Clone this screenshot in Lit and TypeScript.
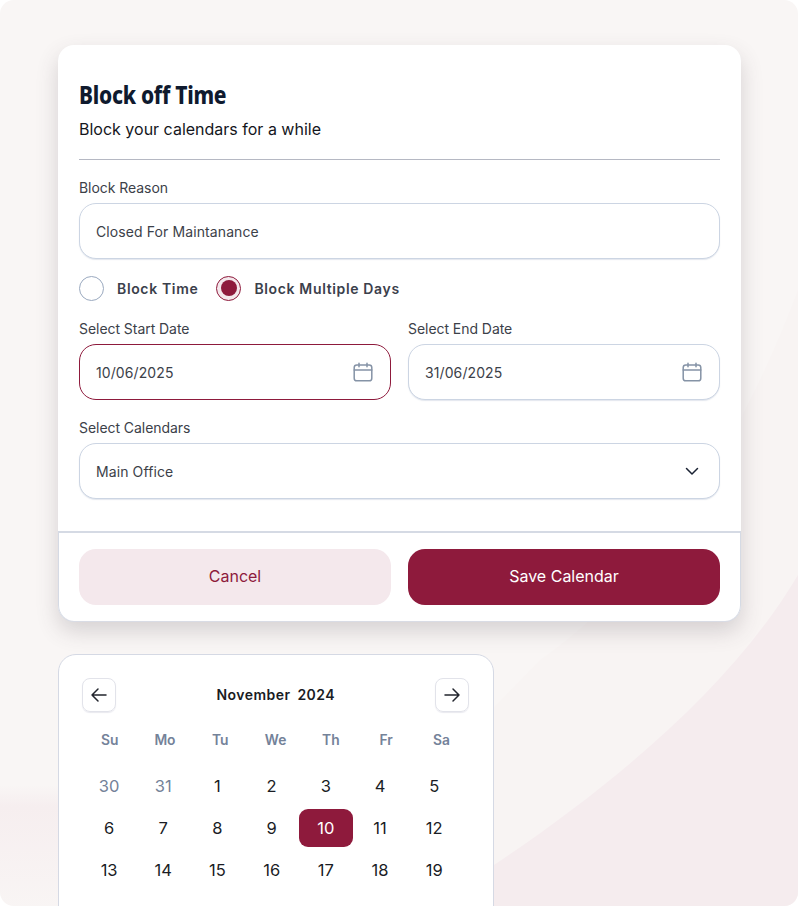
import { LitElement, html, css, svg } from "lit";
import { customElement } from "lit/decorators.js";

const calIcon = html`<svg class="ico" width="20" height="20" viewBox="0 0 20 20" fill="none" stroke="#8593a6" stroke-width="1.5" stroke-linecap="round" stroke-linejoin="round"><rect x="1.2" y="3" width="17.6" height="15.8" rx="2.6"/><path d="M1.2 8h17.6M6 1.2v3.6M14 1.2v3.6"/></svg>`;

const WEEK = ["Su", "Mo", "Tu", "We", "Th", "Fr", "Sa"];
const DAYS: [string, boolean][] = [
  ["30", true], ["31", true],
  ...Array.from({ length: 19 }, (_, i) => [String(i + 1), false] as [string, boolean]),
];

@customElement("app-root")
export class AppRoot extends LitElement {
  static styles = css`
    :host {
      display: block;
      position: relative;
      width: 798px;
      height: 906px;
      overflow: hidden;
      border-radius: 14px;
      background: #f9f6f5;
      font-family: "Inter", "Liberation Sans", sans-serif;
      color: #1a1c24;
      box-sizing: border-box;
      padding: 45px 57px 0 58px;
    }
    * { box-sizing: border-box; }
    .bg { position: absolute; inset: 0; width: 798px; height: 906px; }
    .stack { position: relative; display: flex; flex-direction: column; gap: 33px; }
    .card {
      width: 683px;
      height: 576px;
      background: #fff;
      border-radius: 16px;
      box-shadow: 0 1px 0 #d9dce5, 0 10px 22px rgba(70, 60, 70, 0.2);
      display: flex;
      flex-direction: column;
    }
    .body { flex: 1; padding: 31px 21px 0 21px; display: flex; flex-direction: column; }
    h1 {
      margin: 0;
      font-family: "Noto Sans", sans-serif;
      font-weight: 800;
      font-size: 25.5px;
      line-height: 36px;
      letter-spacing: -0.3px;
      color: #0f1a2e;
      transform: scaleX(0.82);
      transform-origin: left center;
      white-space: nowrap;
    }
    .sub { margin-top: 5px; font-size: 16px; line-height: 24px; color: #14161c; }
    .rule { height: 1px; background: #b5b8c3; margin-top: 18px; }
    label {
      display: block;
      font-size: 14px;
      line-height: 18px;
      letter-spacing: -0.05px;
      color: #3c4149;
    }
    .first { margin-top: 19px; }
    .field {
      margin-top: 6px;
      height: 56px;
      border: 1px solid #ccd5e3;
      border-radius: 17px;
      padding: 0 16px;
      display: flex;
      align-items: center;
      justify-content: space-between;
      font-size: 14px;
      letter-spacing: 0.1px;
      color: #3c4149;
      box-shadow: 0 1px 1px rgba(200, 208, 222, 0.5);
      background: #fff;
    }
    .field.active { border-color: #8e1a3c; box-shadow: none; }
    .ico { flex: none; margin-right: 1px; }
    .radios { margin-top: 16px; display: flex; align-items: center; height: 26px; }
    .radio { display: flex; align-items: center; gap: 13px; margin-right: 18px; font-size: 14px; font-weight: 600; letter-spacing: 0.65px; color: #3b404b; }
    .dot { width: 25px; height: 25px; border-radius: 50%; border: 1.5px solid #9aa9bf; background: #fff; display: flex; align-items: center; justify-content: center; }
    .dot.on { border-color: #8e1a3c; background: #f4e8ec; }
    .dot.on::after { content: ""; width: 16px; height: 16px; border-radius: 50%; background: #8e1a3c; }
    .cols { display: grid; grid-template-columns: 312px 312px; column-gap: 17px; margin-top: 19px; }
    .sel { margin-top: 19px; }
    .footer {
      height: 90px;
      border-top: 2px solid #d5dae4;
      border-left: 1px solid #d5dae4;
      border-right: 1px solid #d5dae4;
      border-radius: 0 0 16px 16px;
      padding: 16px 20px 16px 20px;
      display: grid;
      grid-template-columns: 312px 312px;
      column-gap: 17px;
    }
    .btn { border-radius: 17px; display: flex; align-items: center; justify-content: center; font-size: 16px; padding-bottom: 2px; }
    .cancel { background: #f4e8ec; color: #8e1a3c; }
    .save { background: #8e1a3c; color: #fff; }
    .cal {
      width: 436.5px;
      margin-left: -0.5px;
      height: 300px;
      background: #fff;
      border: 1px solid #d5d9e4;
      border-radius: 18px;
      padding: 23px 23.5px 0 23.5px;
    }
    .head { display: flex; align-items: center; justify-content: space-between; height: 34px; }
    .nav { width: 34px; height: 34px; border: 1px solid #e2e3ea; border-radius: 8px; display: flex; align-items: center; justify-content: center; box-shadow: 0 1px 1px rgba(200, 200, 215, 0.4); }
    .month { font-size: 14px; font-weight: 600; letter-spacing: 0.45px; word-spacing: 3px; color: #1a1c24; padding-bottom: 1px; }
    .week { display: grid; grid-template-columns: repeat(7, 55.3px); margin-top: 18px; height: 20px; align-items: center; justify-items: center; font-size: 13.8px; font-weight: 600; color: #748299; }
    .days { display: grid; grid-template-columns: repeat(7, 54.2px); grid-auto-rows: 38px; row-gap: 4px; margin-top: 17px; }
    .d { display: flex; align-items: center; justify-content: center; font-size: 16.5px; color: #1a1c24; }
    .d.m { color: #748299; }
    .d.s { background: #8e1a3c; color: #fff; border-radius: 9px; }
  `;

  render() {
    return html`
      <svg class="bg" viewBox="0 0 798 906" aria-hidden="true">
        ${svg`
          <defs>
            <linearGradient id="fade" x1="0" y1="0" x2="0" y2="1">
              <stop offset="0" stop-color="#f6eeef" stop-opacity="0"/>
              <stop offset="0.18" stop-color="#f6eeef" stop-opacity="1"/>
              <stop offset="1" stop-color="#f6eeef" stop-opacity="0.15"/>
            </linearGradient>
          </defs>
          <path d="M540 660C640 590 730 470 798 290V906H300Z" fill="#f8f4f3"/>
          <path d="M440 900C600 800 730 690 798 575V906H440Z" fill="#f5ecee"/>
          <rect x="0" y="785" width="300" height="121" fill="url(#fade)"/>
        `}
      </svg>
      <div class="stack">
        <section class="card">
          <div class="body">
            <h1>Block off Time</h1>
            <div class="sub">Block your calendars for a while</div>
            <div class="rule"></div>
            <label class="first">Block Reason</label>
            <div class="field">Closed For Maintanance</div>
            <div class="radios">
              <div class="radio"><span class="dot"></span>Block Time</div>
              <div class="radio"><span class="dot on"></span>Block Multiple Days</div>
            </div>
            <div class="cols">
              <div><label>Select Start Date</label><div class="field active">10/06/2025${calIcon}</div></div>
              <div><label>Select End Date</label><div class="field">31/06/2025${calIcon}</div></div>
            </div>
            <div class="sel">
              <label>Select Calendars</label>
              <div class="field">Main Office
                <svg class="ico" width="20" height="20" viewBox="0 0 20 20" fill="none" stroke="#1a2233" stroke-width="1.5" stroke-linecap="round" stroke-linejoin="round"><path d="M4.5 7.5l5.5 5.5 5.5-5.5"/></svg>
              </div>
            </div>
          </div>
          <div class="footer">
            <div class="btn cancel">Cancel</div>
            <div class="btn save">Save Calendar</div>
          </div>
        </section>
        <section class="cal">
          <div class="head">
            <div class="nav"><svg width="20" height="20" viewBox="0 0 20 20" fill="none" stroke="#22252d" stroke-width="1.5" stroke-linecap="round" stroke-linejoin="round"><path d="M17 10H3M9 4l-6 6 6 6"/></svg></div>
            <div class="month">November 2024</div>
            <div class="nav"><svg width="20" height="20" viewBox="0 0 20 20" fill="none" stroke="#22252d" stroke-width="1.5" stroke-linecap="round" stroke-linejoin="round"><path d="M3 10h14M11 4l6 6-6 6"/></svg></div>
          </div>
          <div class="week">${WEEK.map((w) => html`<span>${w}</span>`)}</div>
          <div class="days">
            ${DAYS.map(([n, muted]) => html`<div class="d ${muted ? "m" : ""} ${n === "10" ? "s" : ""}">${n}</div>`)}
          </div>
        </section>
      </div>
    `;
  }
}
